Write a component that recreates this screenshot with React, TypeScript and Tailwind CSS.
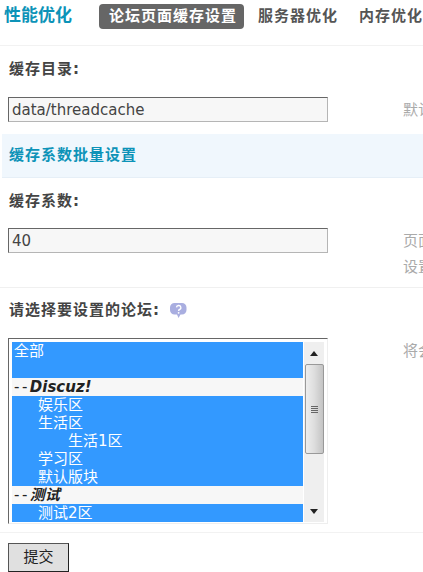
const cjk = "font-['DejaVu_Sans','Noto_Sans_CJK_SC',sans-serif]";

function Label({ children }: { children: React.ReactNode }) {
  return <div className="h-[18px] text-[15px] tracking-[1px] leading-[18px] font-bold text-[#444] whitespace-nowrap">{children}</div>;
}

function Hint({ children }: { children: React.ReactNode }) {
  return <div className="h-[26px] text-[15px] leading-[26px] text-[#aaa] whitespace-nowrap">{children}</div>;
}

function Field({ value }: { value: string }) {
  return (
    <div className="w-[320px] h-[25px] shrink-0 border border-[#b5b5b5] border-t-[#666] border-l-[#666] bg-[#f7f7f7] pl-[3px] text-[15px] leading-[25px] text-[#444]">
      {value}
    </div>
  );
}

function Opt({ text, pad = 2 }: { text: string; pad?: number }) {
  return (
    <div className="h-[18px] text-[15px] leading-[18px] whitespace-nowrap bg-[#3399ff] text-white" style={{ paddingLeft: pad }}>
      {text}
    </div>
  );
}

function Group({ text }: { text: string }) {
  return (
    <div className="h-[18px] pl-[2px] text-[15px] leading-[18px] whitespace-nowrap bg-[#f7f7f7] text-[#222]">
      <span className="tracking-[2.500px]">--</span>
      <span className="font-bold italic">{text}</span>
    </div>
  );
}

export default function App() {
  return (
    <div className={`w-[423px] h-[572px] overflow-hidden bg-white ${cjk}`}>
      {/* tab bar */}
      <div className="h-[46px] flex items-start pt-[4px] pl-[4px] border-b border-[#f2f2f2] whitespace-nowrap">
        <div className="w-[95px] shrink-0 text-[17px] leading-[22px] font-bold text-[#0d93b8]">性能优化</div>
        <div className="h-[25px] pl-[10px] pr-[7px] rounded-[4px] bg-[#666] text-white text-[15px] tracking-[1px] leading-[25px] font-bold">论坛页面缓存设置</div>
        <div className="ml-[14px] text-[15px] tracking-[1px] leading-[25px] font-bold text-[#555]">服务器优化</div>
        <div className="ml-[21px] text-[15px] tracking-[1px] leading-[25px] font-bold text-[#555]">内存优化</div>
      </div>

      {/* cache dir */}
      <div className="pl-[9px] pt-[14px]">
        <Label>缓存目录:</Label>
      </div>
      <div className="h-[56px] flex pl-2 pt-[19px]">
        <Field value="data/threadcache" />
        <div className="ml-[75px]"><Hint>默认</Hint></div>
      </div>

      {/* section header */}
      <div className="ml-[2px] h-[44px] flex items-center pl-[7px] bg-[#f0f7fd] border-b border-[#e6eff7] text-[15px] tracking-[1px] font-bold text-[#0d93b8]">
        缓存系数批量设置
      </div>

      {/* factor */}
      <div className="pl-[9px] pt-[14px]">
        <Label>缓存系数:</Label>
      </div>
      <div className="h-[78px] flex pl-2 pt-[18px] border-b border-[#f0f0f0]">
        <Field value="40" />
        <div className="ml-[75px]">
          <Hint>页面</Hint>
          <Hint>设置</Hint>
        </div>
      </div>

      {/* forum select */}
      <div className="flex items-center pl-[9px] pt-[13px]">
        <Label>请选择要设置的论坛:</Label>
        <svg className="ml-[10px]" width="17" height="17" viewBox="0 0 17 17">
          <path d="M5 1h7a4.500 4.500 0 0 1 4.500 4.500v2.500a4.500 4.500 0 0 1-4.500 4.500h-1.500l-2 3.500-1.500-3.500h-2.500a4.500 4.500 0 0 1-4.500-4.500v-2.500a4.500 4.500 0 0 1 4.500-4.500z" fill="#a9aee0" />
          <path d="M6.500 5.400a2.200 2.100 0 1 1 3.100 2.100c-.7.3-1 .7-1 1.400" fill="none" stroke="#fff" strokeWidth="1.400" />
          <circle cx="8.600" cy="10.800" r=".9" fill="#fff" />
        </svg>
      </div>
      <div className="h-[214px] flex pl-2 pt-[19px] border-b border-[#f2f2f2]">
        <div className="w-[320px] h-[186px] shrink-0 flex border border-[#eee] border-t-[#666] border-l-[#666] bg-white pl-[3px] pt-[3px] pb-[1px] pr-[3px]">
          <div className="flex-1 h-[180px] overflow-hidden bg-[#f7f7f7]">
            <div className="h-[36px] bg-[#3399ff] pl-[2px] text-[15px] leading-[18px] text-white">全部</div>
            <Group text="Discuz!" />
            <Opt text="娱乐区" pad={26} />
            <Opt text="生活区" pad={26} />
            <Opt text="生活1区" pad={56} />
            <Opt text="学习区" pad={26} />
            <Opt text="默认版块" pad={26} />
            <Group text="测试" />
            <Opt text="测试2区" pad={26} />
          </div>
          <div className="w-[20px] h-[180px] ml-[1px] shrink-0 flex flex-col items-center bg-[#efefef]">
            <div className="h-[22px] flex items-center justify-center shrink-0">
              <div className="w-0 h-0 border-x-[4px] border-x-transparent border-b-[5px] border-b-[#222]"></div>
            </div>
            <div className="w-[19px] h-[90px] shrink-0 flex flex-col items-center justify-center gap-[1px] border border-[#999] rounded-[2px] bg-gradient-to-r from-[#eee] via-[#ddd] to-[#c4c4c4]">
              <div className="w-[7px] h-px bg-[#666]"></div>
              <div className="w-[7px] h-px bg-[#666]"></div>
              <div className="w-[7px] h-px bg-[#666]"></div>
              <div className="w-[7px] h-px bg-[#666]"></div>
            </div>
            <div className="flex-1"></div>
            <div className="h-[22px] flex items-center justify-center shrink-0">
              <div className="w-0 h-0 border-x-[4px] border-x-transparent border-t-[5px] border-t-[#222]"></div>
            </div>
          </div>
        </div>
        <div className="ml-[75px]"><Hint>将会</Hint></div>
      </div>

      {/* submit */}
      <div className="pl-2 pt-[10px]">
        <div className="w-[61px] h-[29px] border border-[#222] border-t-[#555] border-l-[#555] bg-[#e0e0e0] text-center text-[15px] leading-[27px] text-[#222]">提交</div>
      </div>
    </div>
  );
}
